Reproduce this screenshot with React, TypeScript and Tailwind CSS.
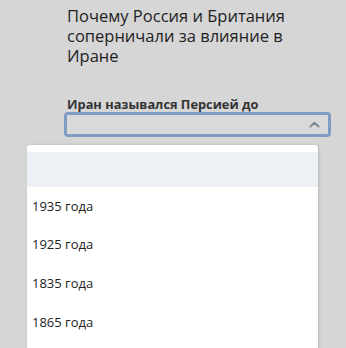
import React from "react";

export default function App() {
  const items = ["1935 года", "1925 года", "1835 года", "1865 года"];
  return (
    <div
      className="relative w-[346px] h-[348px] overflow-hidden bg-[#d6d6d6] text-[#1e1e1e]"
      style={{ fontFamily: '"Open Sans", "Noto Sans", sans-serif' }}
    >
      <div className="pl-[67px] pr-[15px] pt-[6px]">
        <h1 className="text-[16.5px] leading-[20px] font-normal text-[#222]">
          Почему Россия и Британия соперничали за влияние в Иране
        </h1>
        <div className="mt-[30px] text-[12.8px] leading-[16px] font-bold text-[#333]">
          Иран назывался Персией до
        </div>
        <div className="mt-[0px] ml-[-3px] h-[25px] w-[267px] rounded-[4px] border-[3px] border-[#7f9cc4] bg-[#d9d9d9] flex items-center justify-end pr-[8px]">
          <svg width="11" height="7" viewBox="0 0 11 7" fill="none">
            <path d="M1.5 5.5 L5.5 1.8 L9.5 5.5" stroke="#7a8896" strokeWidth="2" strokeLinecap="round" strokeLinejoin="round" />
          </svg>
        </div>
      </div>
      <div className="absolute left-[27px] top-[145px] w-[291px] h-[220px] bg-white rounded-t-[3px] shadow-[1px_0_3px_rgba(0,0,0,0.15)] pt-[7px]">
        <div className="h-[35px] bg-[#edf1f5]" />
        {items.map((t) => (
          <div key={t} className="h-[38.7px] flex items-center pl-[5px] text-[13px] text-[#222]">
            {t}
          </div>
        ))}
      </div>
    </div>
  );
}
